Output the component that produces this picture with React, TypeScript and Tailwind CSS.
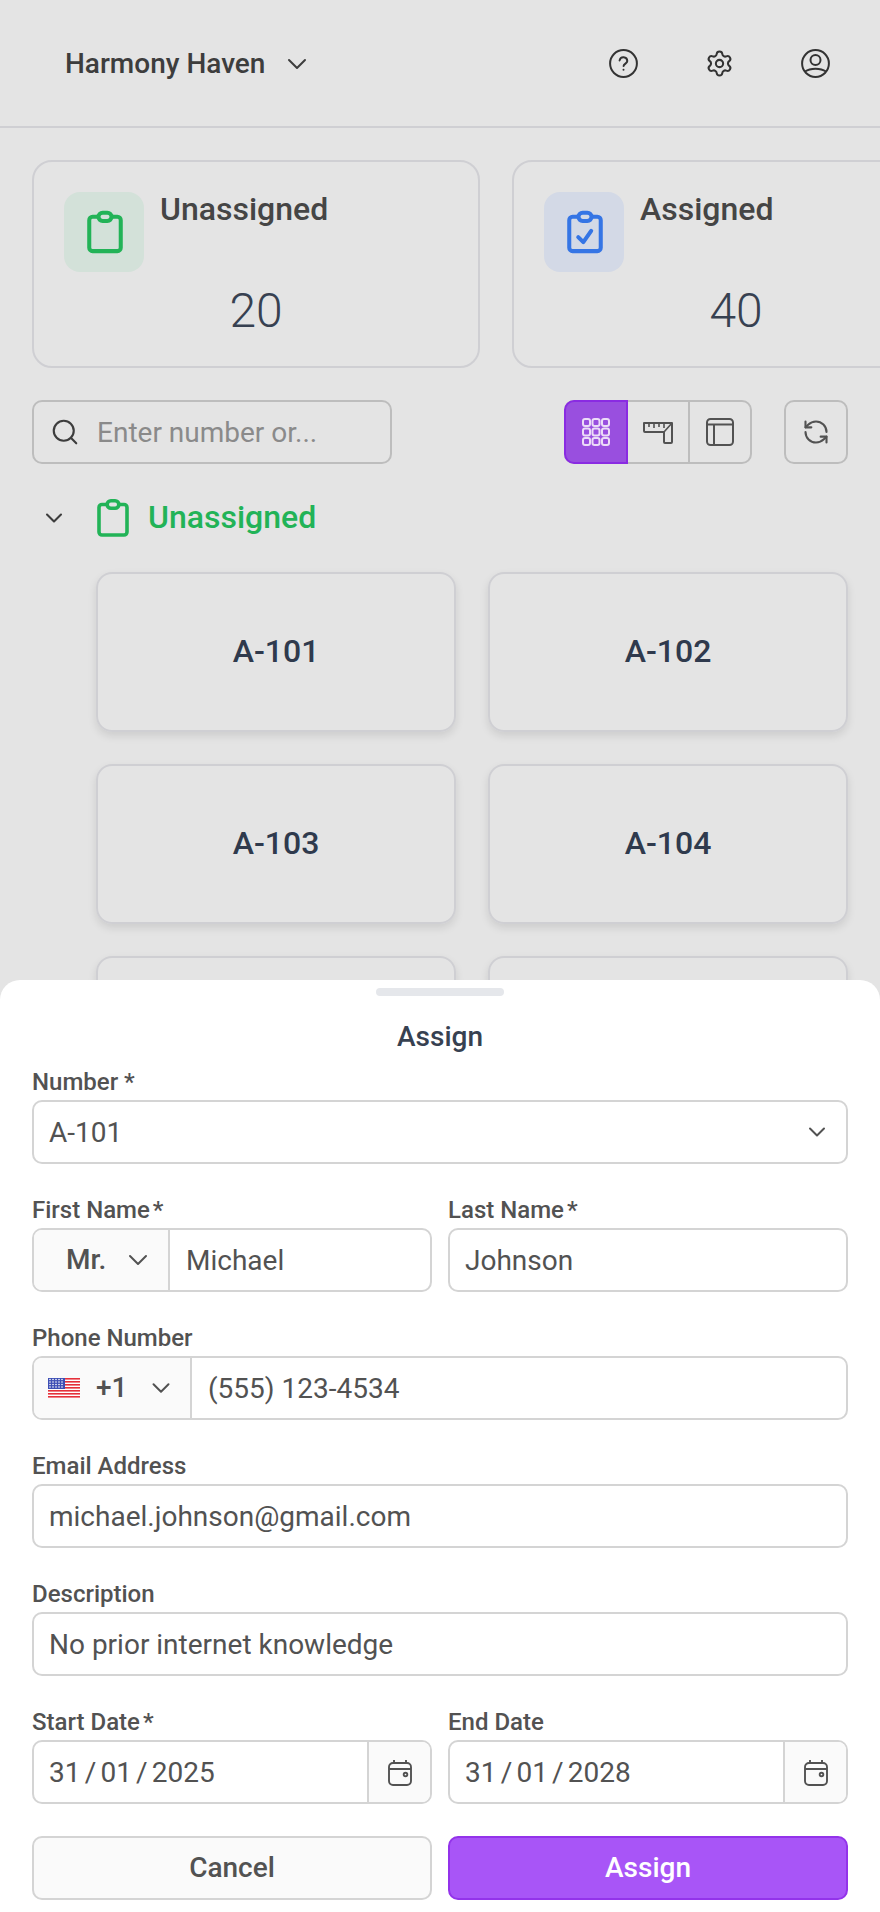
import React from 'react'
import { ChevronDown, Search, Settings, RefreshCcw } from 'lucide-react'

const ClipboardIcon = ({ className = '', check = false }: { className?: string; check?: boolean }) => (
  <svg viewBox="0 0 32 38" fill="none" className={className} stroke="currentColor" strokeWidth="3.6" strokeLinejoin="round">
    <path d="M10 5.5H5a3 3 0 0 0-3 3V33a3 3 0 0 0 3 3h22a3 3 0 0 0 3-3V8.5a3 3 0 0 0-3-3h-5" />
    <rect x="10.2" y="1.8" width="11.6" height="7.4" rx="3.7" />
    {check && <path d="M10 23.5l4.5 4.5 7-10" strokeLinecap="round" />}
  </svg>
)

const HelpIcon = () => (
  <svg viewBox="0 0 29 29" fill="none" stroke="currentColor" strokeWidth="2" className="w-[29px] h-[29px]">
    <circle cx="14.5" cy="14.5" r="13.4" />
    <path d="M10.6 11.4a3.9 3.9 0 0 1 7.7.6c0 2.4-3.6 2.7-3.7 5" strokeLinecap="round" />
    <circle cx="14.5" cy="20.8" r="1" fill="currentColor" stroke="none" />
  </svg>
)

const UserIcon = () => (
  <svg viewBox="0 0 29 29" fill="none" stroke="currentColor" strokeWidth="2" className="w-[29px] h-[29px]">
    <circle cx="14.5" cy="14.5" r="13.4" />
    <circle cx="14.5" cy="11" r="5" />
    <path d="M4 22.5c5.5-3.8 15.5-3.8 21 0" />
  </svg>
)

const GridIcon = () => (
  <svg viewBox="0 0 28 28" fill="none" stroke="#ecdcf8" strokeWidth="2" className="w-7 h-7">
    {[1, 10.5, 20].map((y) =>
      [1, 10.5, 20].map((x) => <rect key={`${x}-${y}`} x={x} y={y} width="7" height="7" rx="2" />)
    )}
  </svg>
)

const RulerIcon = () => (
  <svg viewBox="0 0 30 23" fill="none" stroke="#525252" strokeWidth="2" strokeLinejoin="round" className="w-[30px] h-[23px]">
    <path d="M1 2h28v19a1 1 0 0 1-1 1h-6a1 1 0 0 1-1-1V11H2a1 1 0 0 1-1-1z" />
    <path d="M6 3v3M11 3v4M16 3v3M21 3v4M21 11l8-9" strokeWidth="1.6" />
  </svg>
)

const TableIcon = () => (
  <svg viewBox="0 0 28 28" fill="none" stroke="#525252" strokeWidth="2" className="w-7 h-7">
    <rect x="1" y="1" width="26" height="26" rx="3.5" />
    <path d="M1 6.5h26M8 6.5V27" />
  </svg>
)

const CalendarIcon = () => (
  <svg viewBox="0 0 24 27" fill="none" stroke="#525252" strokeWidth="1.9" className="w-6 h-[27px]">
    <rect x="1" y="4" width="22" height="22" rx="4" />
    <path d="M1 10h22M6 1v3M18 1v3" />
    <circle cx="17.5" cy="15.5" r="1.8" />
  </svg>
)

const FlagIcon = () => (
  <svg viewBox="0 0 32 20" className="w-8 h-5 shrink-0">
    <rect width="32" height="20" fill="#fff" />
    {[0, 3, 6, 9, 12, 15, 18].map((y) => (
      <rect key={y} y={y} width="32" height="1.6" fill="#e5303a" />
    ))}
    <rect width="17" height="11" fill="#3d4fb5" />
    {[1.5, 4, 6.5, 9].map((y) =>
      [2, 5, 8, 11, 14].map((x) => <circle key={`${x}-${y}`} cx={x} cy={y} r="0.8" fill="#fff" />)
    )}
  </svg>
)

const Label = ({ text, star }: { text: string; star?: boolean }) => (
  <div className="h-[36px] text-[24px] leading-[36px] font-medium text-[#525252]">
    {text}
    {star && <span className="ml-[3px]">*</span>}
  </div>
)

const Input = ({ value, className = '' }: { value: string; className?: string }) => (
  <div className={`flex-1 min-w-0 h-full flex items-center pt-[1px] pl-[15px] pr-[15px] text-[28px] text-[#525252] truncate ${className}`}>
    {value}
  </div>
)

const Box = ({ children }: { children: React.ReactNode }) => (
  <div className="h-[64px] flex items-center border-2 border-[#d4d4d4] rounded-[10px] overflow-hidden bg-white">
    {children}
  </div>
)

const StatCard = ({ title, count, tint, color, check }: { title: string; count: number; tint: string; color: string; check?: boolean }) => (
  <div className="w-[448px] h-[208px] shrink-0 border-2 border-[#cfcfd3] rounded-[20px] px-[30px] pt-[30px] flex flex-col">
    <div className="flex gap-4">
      <div className={`w-20 h-20 rounded-[16px] flex items-center justify-center ${tint}`}>
        <ClipboardIcon className={`w-9 h-[44px] ml-[2px] ${color}`} check={check} />
      </div>
      <div className="text-[32px] leading-[36px] -mt-[1px] font-medium text-[#454545]">{title}</div>
    </div>
    <div className="text-center text-[48px] leading-[56px] text-[#374151] font-light mt-[11px]">{count}</div>
  </div>
)

const UnitCard = ({ name }: { name: string }) => (
  <div className="h-[160px] pb-[2px] border-2 border-[#cfcfd3] rounded-[16px] shadow-[0_4px_8px_rgba(0,0,0,0.1)] flex items-center justify-center text-[32px] font-medium text-[#2f3a4d]">
    {name}
  </div>
)

const DateField = ({ label, value, star }: { label: string; value: string; star?: boolean }) => (
  <div>
    <Label text={label} star={star} />
    <Box>
      <Input value={value} className="[word-spacing:-2.75px]" />
      <div className="w-[63px] h-full flex items-center justify-center bg-[#fafafa] border-l-2 border-[#d4d4d4]">
        <CalendarIcon />
      </div>
    </Box>
  </div>
)

export default function App() {
  return (
    <div className="relative w-[880px] h-[1912px] overflow-hidden bg-[#e4e4e4] font-['Roboto',sans-serif]">
      {/* Header */}
      <header className="h-[128px] border-b-2 border-[#cfcfd3] pt-[1px] pl-[65px] pr-[50px] flex items-center justify-between">
        <div className="flex items-center gap-4">
          <span className="text-[28px] font-medium text-[#3d3d3d]">Harmony Haven</span>
          <ChevronDown className="w-8 h-8 text-[#3d3d3d]" strokeWidth={1.5} />
        </div>
        <div className="flex items-center gap-[67px] text-[#333333]">
          <HelpIcon />
          <Settings className="w-[29px] h-[29px]" strokeWidth={1.7} />
          <UserIcon />
        </div>
      </header>

      <main className="pt-[32px]">
        {/* Stats */}
        <div className="flex gap-8 pl-8">
          <StatCard title="Unassigned" count={20} tint="bg-[#d3e1d9]" color="text-[#22b357]" />
          <StatCard title="Assigned" count={40} tint="bg-[#d3d9e6]" color="text-[#3575e5]" check />
        </div>

        {/* Toolbar */}
        <div className="flex items-center px-8 mt-8">
          <div className="w-[360px] h-[64px] border-2 border-[#bdbdbd] rounded-[10px] flex items-center pl-[16px] gap-[17px]">
            <Search className="w-[30px] h-[30px] text-[#3d3d3d]" strokeWidth={1.7} />
            <span className="text-[28px] pt-[1px] text-[#8a8a8a]">Enter number or...</span>
          </div>
          <div className="ml-auto flex h-[64px] w-[188px] border-2 border-[#bdbdbd] rounded-[10px]">
            <div className="w-[64px] -my-[2px] -ml-[2px] shrink-0 bg-[#994fdf] border-2 border-[#8a2be2] rounded-l-[10px] flex items-center justify-center">
              <GridIcon />
            </div>
            <div className="w-[60px] shrink-0 flex items-center justify-center">
              <RulerIcon />
            </div>
            <div className="flex-1 flex items-center justify-center border-l-2 border-[#bdbdbd]">
              <TableIcon />
            </div>
          </div>
          <div className="ml-8 w-[64px] h-[64px] border-2 border-[#bdbdbd] rounded-[10px] flex items-center justify-center">
            <RefreshCcw className="w-[28px] h-[28px] text-[#525252]" strokeWidth={1.8} />
          </div>
        </div>

        {/* Section */}
        <div className="flex items-center h-[44px] mt-[32px] pl-[40px]">
          <ChevronDown className="w-[28px] h-[28px] text-[#3d3d3d]" strokeWidth={1.8} />
          <ClipboardIcon className="w-[32px] h-[38px] ml-[29px] text-[#22b357]" />
          <span className="ml-[19px] -mt-[2px] text-[32px] font-medium text-[#22b357]">Unassigned</span>
        </div>
        <div className="grid grid-cols-2 gap-8 pl-[96px] pr-[32px] mt-[32px]">
          {['A-101', 'A-102', 'A-103', 'A-104', '', ''].map((name, i) => (
            <UnitCard key={i} name={name} />
          ))}
        </div>
      </main>

      {/* Bottom sheet */}
      <section className="absolute left-0 right-0 bottom-0 h-[932px] bg-white rounded-t-[20px] px-8 text-[#525252]">
        <div className="w-[128px] h-[8px] mx-auto mt-2 rounded-full bg-[#e5e7eb]" />
        <h2 className="text-center text-[28px] leading-[36px] font-medium text-[#374151] mt-[23px]">Assign</h2>
        <div className="mt-[9px] flex flex-col gap-[28px]">
          <div>
            <Label text="Number *" />
            <Box>
              <Input value="A-101" />
              <ChevronDown className="w-7 h-7 mr-[15px] text-[#525252]" strokeWidth={1.7} />
            </Box>
          </div>
          <div className="grid grid-cols-2 gap-4">
            <div>
              <Label text="First Name" star />
              <Box>
                <div className="w-[136px] h-full shrink-0 flex items-center justify-between pl-8 pr-[14px] bg-[#fafafa] border-r-2 border-[#d4d4d4] text-[28px] font-medium">
                  Mr.
                  <ChevronDown className="w-8 h-8" strokeWidth={1.5} />
                </div>
                <Input value="Michael" className="pl-[16px]" />
              </Box>
            </div>
            <div>
              <Label text="Last Name" star />
              <Box>
                <Input value="Johnson" />
              </Box>
            </div>
          </div>
          <div>
            <Label text="Phone Number" />
            <Box>
              <div className="w-[158px] h-full shrink-0 flex items-center pl-[14px] pr-[14px] bg-[#fafafa] border-r-2 border-[#d4d4d4] text-[28px] font-medium">
                <FlagIcon />
                <span className="ml-4">+1</span>
                <ChevronDown className="w-[30px] h-[30px] ml-auto" strokeWidth={1.6} />
              </div>
              <Input value="(555) 123-4534" className="pl-[16px]" />
            </Box>
          </div>
          <div>
            <Label text="Email Address" />
            <Box>
              <Input value="michael.johnson@gmail.com" />
            </Box>
          </div>
          <div>
            <Label text="Description" />
            <Box>
              <Input value="No prior internet knowledge" />
            </Box>
          </div>
          <div className="grid grid-cols-2 gap-4">
            <DateField label="Start Date" value="31 / 01 / 2025" star />
            <DateField label="End Date" value="31 / 01 / 2028" />
          </div>
          <div className="grid grid-cols-2 gap-4 mt-[4px]">
            <button className="h-[64px] border-2 border-[#d4d4d4] rounded-[10px] bg-[#fafafa] text-[28px] font-medium text-[#525252]">
              Cancel
            </button>
            <button className="h-[64px] border-2 border-[#9333ea] rounded-[10px] bg-[#a855f7] text-[28px] font-medium text-white">
              Assign
            </button>
          </div>
        </div>
      </section>
    </div>
  )
}
